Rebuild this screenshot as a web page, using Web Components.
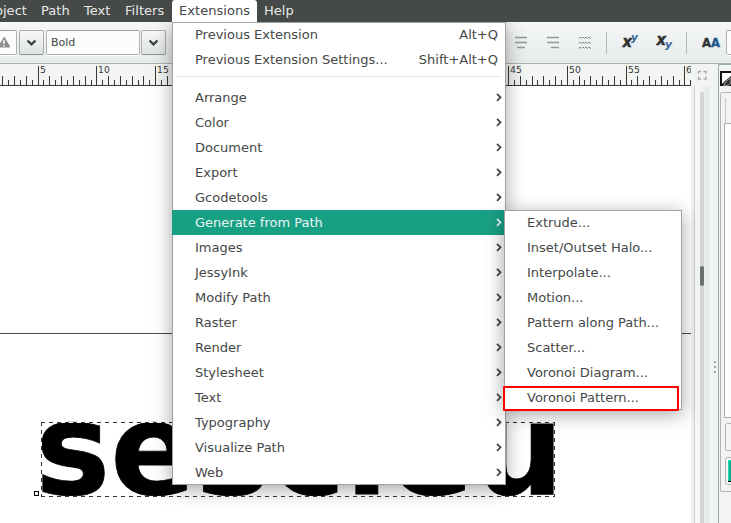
<!DOCTYPE html>
<html lang="en"><head><meta charset="utf-8"><title>Extensions menu</title>
<style>html,body{margin:0;width:731px;height:523px;overflow:hidden;font-family:"DejaVu Sans",sans-serif}</style></head>
<body><draw-app></draw-app>
<script>
const make=(name,html,init)=>customElements.define(name,class extends HTMLElement{
  constructor(){super();this.attachShadow({mode:'open'}).innerHTML=html;}
  connectedCallback(){if(init)init(this,this.shadowRoot);}
});

make('menu-title',`<style>:host{display:block;box-sizing:border-box;height:22px;line-height:22px;padding:0 7px;font-size:13px;letter-spacing:.05px;color:#e8eaea;white-space:nowrap}
:host([open]){background:#fff;color:#444847;border-radius:3px 3px 0 0;margin-top:0}</style><slot></slot>`);

make('menu-bar',`<style>:host{display:flex;height:22px;background:#454947;box-sizing:border-box}
menu-title{flex:none}</style>
<menu-title style="width:34px;padding:0;direction:rtl;overflow:hidden"><span style="display:inline-block;direction:ltr;margin-right:7px">Object</span></menu-title><menu-title style="width:43px">Path</menu-title><menu-title style="width:41px">Text</menu-title><menu-title style="width:54px">Filters</menu-title><menu-title open style="width:85px">Extensions</menu-title><menu-title>Help</menu-title>`);

make('drop-button',`<style>:host{display:flex;box-sizing:border-box;width:25px;height:25px;border:1px solid #a9adab;border-bottom-color:#8f9391;border-radius:2px;background:linear-gradient(#f7f8f8,#dfe2e2);align-items:center;justify-content:center}</style>
<svg width="11" height="8"><path d="M1.5 1.5 5.5 5.3 9.5 1.5" fill="none" stroke="#3c403f" stroke-width="2.3"/></svg>`);

make('text-entry',`<style>:host{display:flex;box-sizing:border-box;height:25px;border:1px solid #b0b3b2;border-top-color:#999d9b;border-radius:2px;background:#fcfcfc;font-size:11px;color:#444847;align-items:center;padding-left:4px;box-shadow:0 1px #fff}</style><slot></slot>`);

make('tool-bar',`<style>:host{display:flex;box-sizing:border-box;height:42px;padding-top:8px;background:linear-gradient(#f5f7f7,#e8ebeb);border-bottom:1px solid #adb1af;align-items:flex-start;overflow:hidden}
:host>*{flex:none} hr{margin:2px 0 0;border:0;width:1px;height:22px;background:#b5b8b7}.gap{width:349px}svg{display:block}</style>
<text-entry style="width:18px;margin-left:-1px;padding:0"><svg width="12" height="14"><path d="M4.2 1.2 9.8 11H-1.5Z" fill="#8d908f" stroke="#8d908f" stroke-width="1" stroke-linejoin="round"/><path d="M4 4v4M4 9v1.5" stroke="#fff" stroke-width="1.4"/></svg></text-entry>
<drop-button style="margin-left:2px"></drop-button>
<text-entry style="width:94px;margin-left:2px">Bold</text-entry>
<drop-button style="margin-left:1px"></drop-button>
<div class="gap"></div>
<svg width="76" height="24" style="margin-top:2px"><g stroke="#949896" stroke-width="1.600"><path d="M0 5.500h12M0 10.500h12M2 15.500h8M32 5.500h12M32 10.500h12M36 15.500h8"/></g><g stroke="#858987" fill="none"><path d="M64 6.500l1-1.5 1.5 1.5 1.5-1.5 1.5 1.5 1.5-1.5 1.5 1.5 1.5-1.5 1.5 1.5 .6-1M64 11.500l1-1.5 1.5 1.5 1.5-1.5 1.5 1.5 1.5-1.5 1.5 1.5 1.5-1.5 1.5 1.5 .6-1M64 16.500l1-1.5 1.5 1.5 1.5-1.5 1.5 1.5 1.5-1.5 1.5 1.5 1.5-1.5 1.5 1.5 .6-1"/></g></svg>
<hr style="margin-left:15px">
<svg width="20" height="26" style="margin-left:15px"><g font-family="DejaVu Sans" font-weight="bold" font-style="italic"><text x="0.5" y="17" font-size="15.500" fill="#303332" stroke="#303332" stroke-width=".5" textLength="9.5" lengthAdjust="spacingAndGlyphs">x</text><text x="9" y="10.5" font-size="11" fill="#356699" textLength="7" lengthAdjust="spacingAndGlyphs">y</text></g></svg>
<svg width="20" height="26" style="margin-left:14px"><g font-family="DejaVu Sans" font-weight="bold" font-style="italic"><text x="0.5" y="15" font-size="15.500" fill="#303332" stroke="#303332" stroke-width=".5" textLength="9.5" lengthAdjust="spacingAndGlyphs">x</text><text x="9" y="18" font-size="11" fill="#356699" textLength="7" lengthAdjust="spacingAndGlyphs">y</text></g></svg>
<hr style="margin-left:10px">
<svg width="20" height="26" style="margin-left:15px"><g font-family="DejaVu Sans" font-weight="bold" font-size="12" stroke-width=".4"><text x="0" y="17" fill="#303332" stroke="#303332" textLength="9" lengthAdjust="spacingAndGlyphs">A</text><text x="9" y="17" fill="#225588" stroke="#225588" textLength="9" lengthAdjust="spacingAndGlyphs">A</text></g></svg>
<text-entry style="width:20px;margin-left:4px"></text-entry>`);

make('ruler-strip',`<style>:host{display:block;height:22px;background:#f2f4f2}svg{display:block}</style><svg width="691" height="22"></svg>`,(el,root)=>{
  let s='';
  for(let i=-8;i<=112;i++){
    const x=Math.floor(38.1+i*5.88), major=((i%10)+10)%10===0, mid=i%2===0;
    if(x<0||x>690)continue;
    s+=`<rect x="${x}" y="${major?2:mid?12:16}" width="1" height="${major?20:mid?10:6}"/>`;
    if(major)s+=`<text x="${x+2}" y="9">${5+i/2}</text>`;
  }
  root.querySelector('svg').innerHTML=`<g fill="#353938" font-family="DejaVu Sans" font-size="9.2" letter-spacing=".1">${s}<rect y="21" width="691" height="1"/></g>`;
});

make('art-board',`<style>:host{display:block;height:437px;background:#fff}svg{display:block}</style>
<svg width="691" height="437" viewBox="0 86 691 437"><path d="M0 333.5H691" stroke="#4c4c4c"/>
<text x="35.2" y="494" font-family="DejaVu Sans" font-weight="bold" font-size="127.5" stroke="#000" stroke-width=".8" textLength="528.5" lengthAdjust="spacingAndGlyphs">sescieu</text>
<path d="M41 422.5H555M41 496.5H555M41.5 422V497M554.5 422V497" fill="none" stroke="#fff"/><path d="M41 422.5H555M41 496.5H555M41.5 422V497M554.5 422V497" fill="none" stroke="#333" stroke-dasharray="4 4"/>
<rect x="34.5" y="491.500" width="4" height="4" fill="#fff" stroke="#000"/></svg>`);

make('scroll-column',`<style>:host{display:block;height:459px;background:#f2f4f2}svg{display:block}</style>
<svg width="27" height="459"><defs><linearGradient id="g"><stop offset="0" stop-color="#f9fafa"/><stop offset="1" stop-color="#e4e9ea"/></linearGradient></defs>
<g fill="none" stroke="#a6aaa8" stroke-width="1.3"><path d="M7.500 10V7.500H10M12.500 7.500H15V10M15 12.500V15H12.500M10 15H7.500V12.500"/></g>
<rect y="22" width="3" height="437" fill="#f0f1f1"/><rect x="3" y="22" width="1" height="437" fill="#c9cccb"/><rect x="4" y="22" width="14" height="437" fill="url(#g)"/>
<rect x="9" y="28" width="4" height="440" rx="2" fill="#d3d5d4"/><rect x="9" y="202" width="4" height="20" rx="2" fill="#6b6f6d"/>
<g fill="#a3a7a5"><rect x="23" y="297" width="2" height="2"/><rect x="23" y="302" width="2" height="2"/><rect x="23" y="307" width="2" height="2"/></g></svg>`);

make('side-dock',`<style>:host{display:block;height:459px;background:#f2f4f2}svg{display:block}</style>
<svg width="13" height="459" viewBox="718 64 13 459">
<path d="M718.500 523V64.500H731" fill="none" stroke="#9bada3"/>
<path d="M720 71H731V86H720Z" fill="#111"/><path d="M722 73H731V76L725 81L722 84Z" fill="#fff"/><path d="M724 85C725 82 728 79 731 78V83C729 85 727 86 724 86Z" fill="#333" stroke="#ccc" stroke-width=".8"/>
<path d="M731 92.500H722.500Q720.500 92.500 720.500 94.500V491.500H731" fill="none" stroke="#b2b5b4"/><path d="M725.500 98V123" stroke="#c3c6c5"/>
<path d="M731 123.500H724.500V417.500H731" fill="#fcfcfc" stroke="#a8acaa"/>
<rect x="725.500" y="423.500" width="12" height="27" rx="2" fill="#f3f4f4" stroke="#aeb2b0"/><rect x="725.500" y="457.500" width="12" height="27" rx="2" fill="#f3f4f4" stroke="#aeb2b0"/>
<rect x="728" y="460" width="3" height="22" fill="#14ae8c"/><path d="M728.500 460V482M728 460.500H731" stroke="#18e0b5"/><rect x="728" y="481" width="3" height="1"/></svg>`);

make('menu-row',`<style>:host{display:flex;box-sizing:border-box;height:25px;align-items:center;justify-content:space-between;padding:0 8px 0 23px;font-size:13px;color:#444847;white-space:nowrap}
:host([active]){background:#18a085;color:#e8f5f2;margin-right:1px;padding-right:7px}svg{display:none}:host([sub]) svg{display:block;margin-right:-5px}</style>
<span><slot></slot></span><slot name="key"></slot><svg width="7" height="9"><path d="M1 .8 4.500 4.300 1 7.800" fill="none" stroke="currentColor" stroke-width="1.8"/></svg>`);

make('pop-menu',`<style>:host{display:block;box-sizing:border-box;background:#fff;box-shadow:inset 0 0 0 1px #a0a2a1,0 4px 18px rgba(0,0,0,.36)}</style><slot></slot>`);

const row=t=>`<menu-row sub${t==='Generate from Path'?' active':''}>${t}</menu-row>`;
make('draw-app',`<style>:host{display:block;position:relative;width:731px;height:523px;overflow:hidden}
menu-bar{position:relative;z-index:1}
.work{display:grid;grid-template-columns:691px 27px 13px;height:459px}
.main{position:absolute;left:172px;top:22px;width:334px;height:463px}.side{position:absolute;left:504px;top:210px;width:178px;height:200px}
.mark{position:absolute;box-sizing:border-box;left:503px;top:386px;width:176px;height:25px;border:2px solid #f00;border-radius:1px}
hr{margin:4px 5px 8px;border:0;height:1px;background:#e4e5e5}</style>
<menu-bar></menu-bar><tool-bar></tool-bar>
<div class="work"><div><ruler-strip></ruler-strip><art-board></art-board></div><scroll-column></scroll-column><side-dock></side-dock></div>
<pop-menu class="main"><menu-row>Previous Extension<span slot="key">Alt+Q</span></menu-row><menu-row>Previous Extension Settings...<span slot="key">Shift+Alt+Q</span></menu-row><hr>
${['Arrange','Color','Document','Export','Gcodetools','Generate from Path','Images','JessyInk','Modify Path','Raster','Render','Stylesheet','Text','Typography','Visualize Path','Web'].map(row).join('')}</pop-menu>
<pop-menu class="side">${['Extrude...','Inset/Outset Halo...','Interpolate...','Motion...','Pattern along Path...','Scatter...','Voronoi Diagram...','Voronoi Pattern...'].map(t=>`<menu-row>${t}</menu-row>`).join('')}</pop-menu>
<div class="mark"></div>`);
</script></body></html>
